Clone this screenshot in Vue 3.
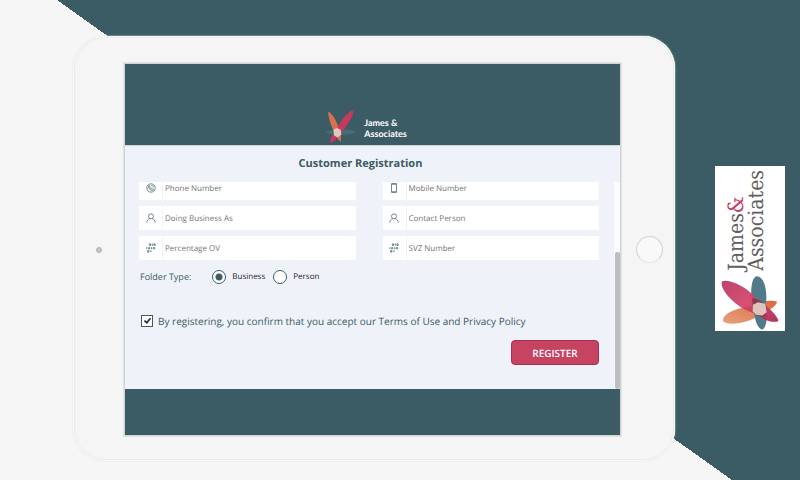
<template>
  <div class="page">
    <main class="tablet">
      <span class="camera"></span>
      <div class="screen">
        <header class="brand">
          <svg class="brand-logo" viewBox="70 30 95 100" aria-hidden="true">
            <ellipse cx="119" cy="98" rx="44" ry="8" fill="#4a6b75" />
            <path d="M81 38 C94 42 106 65 113 88 C120 104 120 118 118 127 C110 120 104 108 99 97 C90 80 82 56 81 38Z" fill="#d9714f" />
            <path d="M155 34 C157 47 143 72 122 97 C112 112 99 129 87 129 C86 120 92 108 103 98 C114 68 137 39 155 34Z" fill="#c53a5c" />
            <path d="M97 90 L107 86 L118 91 L120 105 L109 114 L98 107Z" fill="#dfc9bd" />
          </svg>
          <p class="brand-name">James &amp;<br />Associates</p>
        </header>

        <section class="panel">
          <h1 class="title">Customer Registration</h1>
          <div class="scroll-area">
            <form class="form" @submit.prevent>
              <div class="fields">
                <label class="field" v-for="field in fields" :key="field.name">
                  <span class="field-icon">
                    <svg v-if="field.icon === 'phone'" viewBox="0 0 24 24" aria-hidden="true">
                      <circle cx="12" cy="12" r="10" />
                      <path d="M7 6 L6 9 C7 14 10 17 15 18 L18 16 L14 13 L12 14 L9 10 L10 8Z M13 6 C16 6 18 8 18 11" />
                    </svg>
                    <svg v-else-if="field.icon === 'mobile'" viewBox="0 0 24 24" aria-hidden="true">
                      <rect x="6" y="1" width="12" height="22" rx="1" />
                      <path d="M6 3 H18 M6 21 H18" />
                    </svg>
                    <svg v-else-if="field.icon === 'person'" viewBox="0 0 24 24" aria-hidden="true">
                      <circle cx="12" cy="8" r="6" />
                      <path d="M2 23 C2 18 5 15 9 14 M22 23 C22 18 19 15 15 14" />
                    </svg>
                    <svg v-else viewBox="0 0 24 24" aria-hidden="true">
                      <path d="M8 2 H11 V6 H8Z M15 1 V7 M19 2 H22 V6 H19Z M2 10 V15 M6 11 H9 V14 H6Z M13 10 V15 M17 11 H21 V14 H17Z M4 18 H7 V22 H4Z M11 18 V20 H14" />
                    </svg>
                  </span>
                  <input type="text" :name="field.name" :placeholder="field.label" :aria-label="field.label" />
                </label>
              </div>

              <div class="folder" role="radiogroup" aria-labelledby="folder-label">
                <span id="folder-label" class="folder-label">Folder Type:</span>
                <label class="option" v-for="type in folderTypes" :key="type">
                  <input type="radio" name="folder" :value="type" v-model="folderType" />
                  {{ type }}
                </label>
              </div>

              <label class="terms">
                <input type="checkbox" v-model="accepted" />
                By registering, you confirm that you accept our Terms of Use and Privacy Policy
              </label>

              <button type="submit" class="register">REGISTER</button>
            </form>
            <div class="track"><div class="thumb"></div></div>
          </div>
        </section>

        <footer class="bottom"></footer>
      </div>
      <span class="home"></span>
    </main>

    <aside class="card">
      <p class="card-name">James<span class="amp">&amp;</span><br />Associates</p>
      <svg class="card-logo" viewBox="55 345 180 170" aria-hidden="true">
        <defs>
          <linearGradient id="pink" x1="0" y1="0" x2="1" y2="1">
            <stop offset="0" stop-color="#b93560" />
            <stop offset="0.5" stop-color="#d34369" />
            <stop offset="1" stop-color="#a92450" />
          </linearGradient>
          <linearGradient id="orange" x1="0" y1="1" x2="1" y2="0">
            <stop offset="0" stop-color="#e6a27d" />
            <stop offset="1" stop-color="#d9683f" />
          </linearGradient>
        </defs>
        <path d="M65 487 C58 470 95 446 148 443 C178 426 210 421 226 428 C223 443 199 457 174 466 C145 492 83 501 65 487Z" fill="url(#orange)" />
        <path d="M165 351 C184 350 198 385 193 432 C200 470 194 505 183 511 C170 511 162 490 158 466 C144 420 145 355 165 351Z" fill="#517b88" />
        <path d="M61 367 C75 358 137 380 164 420 C195 437 229 469 230 486 C214 493 183 481 162 463 C110 452 52 394 61 367Z" fill="url(#pink)" fill-opacity="0.93" />
        <path d="M151 419 C156 414 180 424 192 437 L194 463 C187 475 171 474 159 463Z" fill="#8c3a50" />
        <path d="M154 437 L169 429 L191 434 L195 459 L182 469 L163 467 L153 456Z" fill="#dec5b9" />
      </svg>
    </aside>
  </div>
</template>

<script setup>
import { ref } from 'vue';

const fields = [
  { name: 'phone', label: 'Phone Number', icon: 'phone' },
  { name: 'mobile', label: 'Mobile Number', icon: 'mobile' },
  { name: 'business', label: 'Doing Business As', icon: 'person' },
  { name: 'contact', label: 'Contact Person', icon: 'person' },
  { name: 'percentage', label: 'Percentage OV', icon: 'digits' },
  { name: 'svz', label: 'SVZ Number', icon: 'digits' },
];
const folderTypes = ['Business', 'Person'];

const folderType = ref('Business');
const accepted = ref(true);
</script>

<style>
body {
  margin: 0;
  background: #f6f6f6;
}
</style>

<style scoped>
.page * {
  box-sizing: border-box;
}
.page {
  box-sizing: border-box;
  min-height: 100vh;
  padding: 36px 15px 19px 73px;
  display: flex;
  align-items: center;
  gap: 40px;
  font-family: "Open Sans", sans-serif;
  text-rendering: geometricPrecision;
  color: #3b5b65;
  /* diagonal split between the light and the teal side */
  background: linear-gradient(to top right, #f6f6f6 50%, #3b5b65 50%) 57px 0 / 675px 100% no-repeat,
    linear-gradient(#3b5b65, #3b5b65) 732px 0 / 100% 100% no-repeat,
    #f6f6f6;
}
.tablet {
  flex: 1;
  display: grid;
  grid-template-columns: 51px 1fr 54px;
  align-items: center;
  padding: 27px 0 25px;
  border-radius: 32px;
  background: #f5f5f5;
  box-shadow: inset 0 0 0 1px #f9f9f9, inset 0 0 0 2px #ebebeb, 0 0 2px #dddddd;
}
.camera {
  width: 6px;
  height: 6px;
  justify-self: center;
  border-radius: 50%;
  background: #c4c4c4;
  border: 1px solid #b2b2b2;
}
.home {
  width: 27px;
  height: 27px;
  margin-left: 2px;
  justify-self: center;
  border-radius: 50%;
  border: 1px solid #d2d2d2;
  border-bottom-color: #e6e6e6;
  background: #f9f9f9;
}
.screen {
  border: 1px solid #cfd4d6;
  outline: 1px solid #e2e2e2;
}
.brand {
  height: 82px;
  padding: 0 14px 2px 0;
  display: flex;
  align-items: flex-end;
  justify-content: center;
  gap: 7px;
  background: #3b5b65;
  border-bottom: 1px solid #cdd6dc;
}
.brand-logo {
  width: 33px;
  height: 34px;
}
.brand-name {
  margin: 0 0 4px;
  font: 700 9px/11px Lato, sans-serif;
  color: #ffffff;
}
.panel {
  background: #eff2f8;
}
.title {
  margin: 0;
  padding: 10px 24px 10px 0;
  font-size: 11px;
  line-height: 16px;
  font-weight: 700;
  text-align: center;
}
.scroll-area {
  display: flex;
  overflow: hidden;
}
.form {
  flex: 1;
  display: flex;
  flex-direction: column;
  padding: 0 15px 24px 14px;
}
.fields {
  margin-top: -6px;
  display: grid;
  grid-template-columns: 1fr 1fr;
  gap: 6px 27px;
}
.field {
  height: 24px;
  display: flex;
  background: #ffffff;
}
.field-icon {
  width: 24px;
  display: flex;
  align-items: center;
  justify-content: center;
  border-right: 1px solid #eff2f8;
}
.field-icon svg {
  width: 10px;
  height: 10px;
  fill: none;
  stroke: #54717a;
  stroke-width: 2;
}
.field input {
  flex: 1;
  min-width: 0;
  padding: 0 2px;
  border: 0;
  outline: 0;
  background: transparent;
  font: 8px "Open Sans", sans-serif;
  text-rendering: inherit;
  color: #3b5b65;
}
.field input::placeholder {
  color: #757575;
}
.folder {
  margin: 10px 0 30px 1px;
  display: flex;
  align-items: center;
  line-height: 14px;
}
.folder-label {
  margin-right: 21px;
  font-size: 9px;
}
.option {
  display: flex;
  align-items: center;
  gap: 6px;
  margin-right: 8px;
  font-size: 8px;
  color: #222222;
}
input[type="radio"] {
  appearance: none;
  width: 14px;
  height: 14px;
  margin: 0;
  border: 1px solid #3b5b65;
  border-radius: 50%;
  background: #ffffff;
}
input[type="radio"]:checked {
  background: radial-gradient(circle, #3b5b65 3px, #ffffff 4px);
}
.terms {
  display: flex;
  align-items: center;
  gap: 5px;
  margin-left: 2px;
  font-size: 10px;
  line-height: 14px;
}
input[type="checkbox"] {
  appearance: none;
  display: grid;
  place-items: center;
  width: 12px;
  height: 12px;
  margin: 0;
  border: 1px solid #3b5b65;
  background: #ffffff;
}
input[type="checkbox"]:checked::after {
  content: "";
  width: 3px;
  height: 6px;
  margin-bottom: 2px;
  border: solid #222222;
  border-width: 0 2px 2px 0;
  box-sizing: content-box;
  transform: rotate(40deg) scale(0.8);
}
.register {
  align-self: flex-end;
  width: 88px;
  height: 25px;
  margin-top: 12px;
  padding: 0;
  border: 1px solid #a92f50;
  border-radius: 4px;
  background: #c74362;
  color: #ffffff;
  font: 600 10px "Open Sans", sans-serif;
  text-rendering: inherit;
}
.track {
  width: 6px;
  display: flex;
  align-items: flex-end;
  justify-content: flex-end;
  background: #fafbfc;
}
.thumb {
  width: 5px;
  height: 66%;
  border-radius: 2px;
  background: #bcbebf;
}
.bottom {
  height: 46px;
  background: #3b5b65;
}
.card {
  width: 70px;
  padding: 4px 0 0;
  display: flex;
  flex-direction: column;
  align-items: center;
  gap: 4px;
  background: #ffffff;
}
.card-name {
  margin: 0 8px 0 0;
  writing-mode: vertical-rl;
  transform: rotate(180deg);
  font: 21px/20px "DejaVu Serif Condensed", "DejaVu Serif", serif;
  color: #5e5e60;
}
.amp {
  color: #c53a62;
}
.card-logo {
  width: 60px;
  height: 57px;
}
</style>
